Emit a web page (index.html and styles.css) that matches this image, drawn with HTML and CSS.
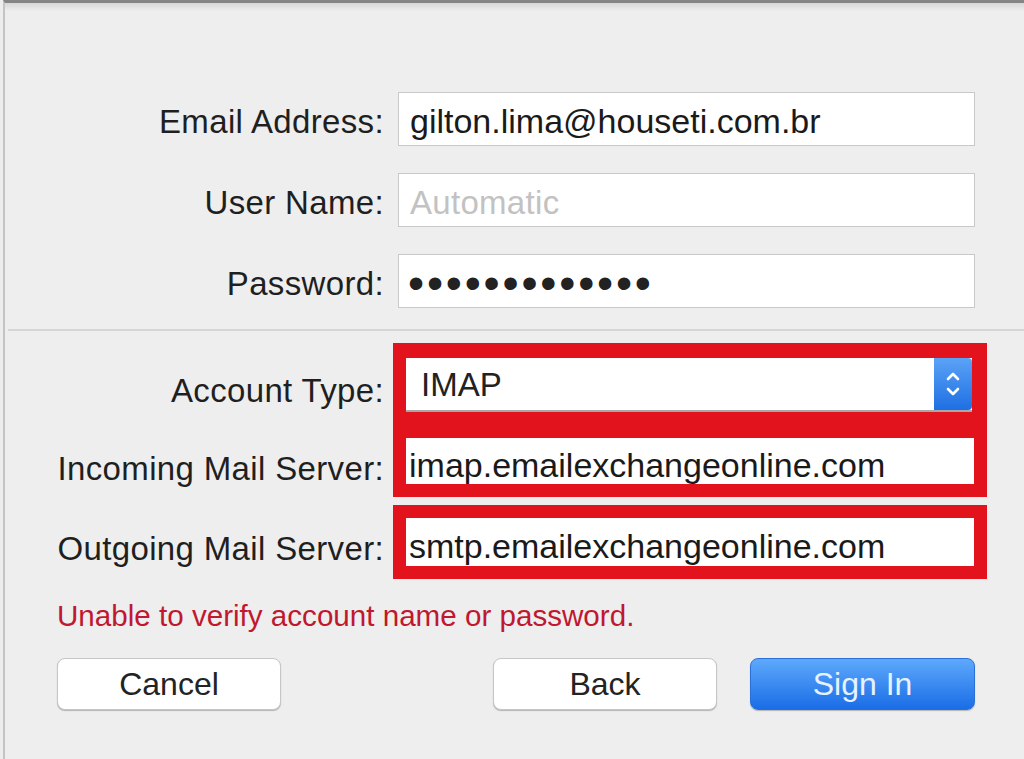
FILE: index.html
```html
<!DOCTYPE html>
<html lang="en">
<head>
    <meta charset="UTF-8">
    <title>Add Account</title>
    <meta name="viewport" content="width=device-width, initial-scale=1.0">
    <link rel="stylesheet" href="styles.css">
</head>
<body>
    <div class="window">
        <!-- Account credentials -->
        <div class="form-grid">
            <label class="label">Email Address:</label>
            <div class="field">gilton.lima@houseti.com.br</div>

            <label class="label">User Name:</label>
            <div class="field placeholder">Automatic</div>

            <label class="label">Password:</label>
            <div class="field password">&bull;&bull;&bull;&bull;&bull;&bull;&bull;&bull;&bull;&bull;&bull;&bull;&bull;</div>
        </div>

        <div class="separator"></div>

        <!-- Server settings -->
        <div class="server-grid">
            <label class="label label-type">Account Type:</label>
            <label class="label label-in">Incoming Mail Server:</label>
            <div class="highlight highlight-top">
                <div class="select">
                    <span class="select-value">IMAP</span>
                    <span class="select-arrows">
                        <svg width="16" height="32" viewBox="0 0 16 32">
                            <path d="M3 11 L8 6 L13 11" fill="none" stroke="#ffffff" stroke-width="2.6" stroke-linecap="round" stroke-linejoin="round"/>
                            <path d="M3 21 L8 26 L13 21" fill="none" stroke="#ffffff" stroke-width="2.6" stroke-linecap="round" stroke-linejoin="round"/>
                        </svg>
                    </span>
                </div>
                <div class="field server">imap.emailexchangeonline.com</div>
            </div>

            <label class="label label-out">Outgoing Mail Server:</label>
            <div class="highlight highlight-bottom">
                <div class="field server">smtp.emailexchangeonline.com</div>
            </div>
        </div>

        <p class="error">Unable to verify account name or password.</p>

        <div class="actions">
            <button class="btn">Cancel</button>
            <div class="actions-right">
                <button class="btn">Back</button>
                <button class="btn btn-primary">Sign In</button>
            </div>
        </div>
    </div>
</body>
</html>
```

FILE: styles.css
```css
body {
    margin: 0;
    background-color: #ededed;
    font-family: "Liberation Sans", Arial, sans-serif;
    color: #1e1e1e;
}
.window {
    min-height: 100vh;
    box-sizing: border-box;
    margin-left: 3px;
    border-top: 3px solid #858585;
    border-left: 2px solid #c4c4c4;
    background: linear-gradient(#d6d6d6, #eeeeee 8px, #eeeeee);
    padding-top: 89px;
}
.form-grid {
    display: grid;
    grid-template-columns: 379px 577px;
    grid-auto-rows: 54px;
    column-gap: 14px;
    row-gap: 27px;
}
.label {
    display: flex;
    align-items: center;
    justify-content: flex-end;
    padding-top: 5px;
    font-size: 33px;
    letter-spacing: 0.35px;
    color: #1f1f1f;
    white-space: nowrap;
}
.field {
    display: flex;
    align-items: center;
    box-sizing: border-box;
    background: #ffffff;
    border: 1px solid #c9c9c9;
    padding-left: 11px;
    padding-top: 5px;
    font-size: 34px;
    color: #1a1a1a;
    white-space: nowrap;
}
.placeholder {
    color: #c2c2c2;
    font-size: 33px;
    letter-spacing: 0.3px;
}
.password {
    font-size: 46px;
    letter-spacing: 2.8px;
    color: #222222;
    padding-left: 9px;
    padding-top: 4px;
}
.separator {
    height: 2px;
    margin: 21px 0 0 3px;
    background: #d5d5d5;
}
.server-grid {
    display: grid;
    grid-template-columns: 379px 594px;
    grid-template-rows: 92px 62px 8px 74px;
    column-gap: 9px;
    margin-top: 12px;
}
.label-type {
    grid-column: 1;
    grid-row: 1;
    padding-top: 4px;
}
.label-in {
    grid-column: 1;
    grid-row: 2;
    padding-top: 6px;
}
.label-out {
    grid-column: 1;
    grid-row: 4;
    padding-top: 14px;
}
.highlight {
    grid-column: 2;
    box-sizing: border-box;
    border: 13px solid #e3131d;
    background: #e3131d;
    display: flex;
    flex-direction: column;
}
.highlight-top {
    grid-row: 1 / 3;
    padding-top: 2px;
    gap: 26px;
}
.highlight-bottom {
    grid-row: 4;
}
.server {
    border: none;
    padding-left: 3px;
    padding-top: 9px;
    font-size: 34px;
    letter-spacing: 0;
    height: 48px;
}
.highlight-top .server {
    height: 46px;
}
.select {
    display: flex;
    height: 54px;
    margin-right: 2px;
    background: #ffffff;
    border-bottom: 2px solid #a8a8a8;
    box-sizing: border-box;
}
.select-value {
    flex: 1;
    display: flex;
    align-items: center;
    padding-left: 15px;
    padding-top: 2px;
    font-size: 33px;
    color: #222222;
}
.select-arrows {
    width: 38px;
    display: flex;
    align-items: center;
    justify-content: center;
    background: linear-gradient(#5aa3f7, #1f6fe2);
    border-radius: 0 4px 4px 0;
}
.error {
    margin: 20px 0 0;
    padding-left: 52px;
    font-size: 29.6px;
    line-height: 34px;
    color: #c0182f;
}
.actions {
    display: flex;
    justify-content: space-between;
    margin-top: 25px;
    padding-left: 52px;
    width: 918px;
}
.actions-right {
    display: flex;
    gap: 33px;
}
.btn {
    width: 224px;
    height: 52px;
    background: #ffffff;
    border: 1px solid #c6c6c6;
    border-radius: 8px;
    box-shadow: 0 1px 1px rgba(0, 0, 0, 0.25);
    font-family: "Liberation Sans", Arial, sans-serif;
    font-size: 32px;
    color: #232323;
    padding: 0;
}
.btn-primary {
    width: 225px;
    background: linear-gradient(#5ea9fc, #1a6de6);
    border-color: #2b6fd8;
    color: #e6f3ff;
}
```
